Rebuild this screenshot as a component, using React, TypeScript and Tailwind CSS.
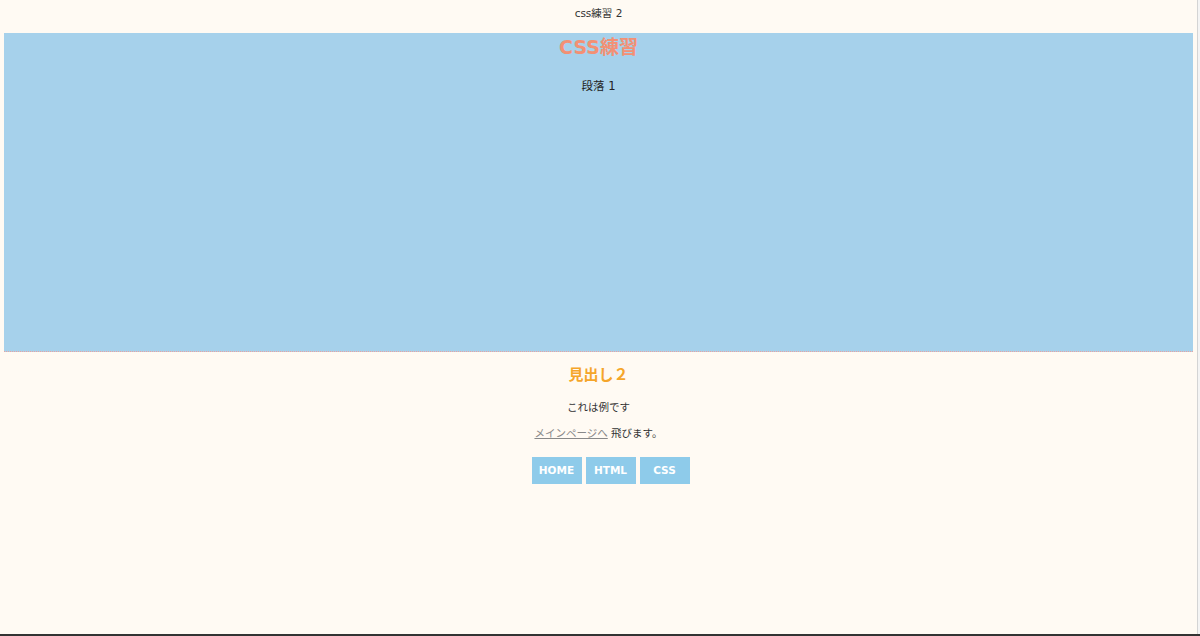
export default function App() {
  const font = { fontFamily: '"DejaVu Sans", Verdana, "Noto Sans CJK JP", sans-serif' };
  return (
    <div className="w-[1200px] h-[636px] flex flex-col overflow-hidden bg-[#fffaf3]" style={font}>
      <div className="flex flex-1 min-h-0">
        <div className="flex-1 flex flex-col items-stretch">
          <div className="h-[33px] flex items-center justify-center text-[10.5px] text-[#333] pb-[10px] pt-[4px]">
            css練習 2
          </div>
          <div className="mx-[4px] h-[319px] bg-[#a6d1eb] border-b border-dotted border-[#e9a3a0] flex flex-col items-center">
            <h1 className="text-[19px] font-bold text-[#f39074] leading-[26px] mt-[1px]">CSS練習</h1>
            <p className="text-[11.5px] text-[#222] mt-[18px] leading-[16px]">段落 1</p>
          </div>
          <div className="flex flex-col items-center">
            <h2 className="text-[15px] font-bold text-[#f5a52a] leading-[20px] mt-[13px]">見出し２</h2>
            <p className="text-[10.5px] text-[#333] leading-[16px] mt-[14px]">これは例です</p>
            <p className="text-[10.5px] text-[#333] leading-[16px] mt-[10px]">
              <a className="text-[#888] underline">メインページへ</a> 飛びます。
            </p>
            <div className="flex gap-[4px] mt-[16px] ml-[24px]">
              {['HOME', 'HTML', 'CSS'].map((t) => (
                <div key={t} className="w-[50px] h-[27px] bg-[#8ecbea] text-white text-[10.5px] font-bold flex items-center justify-center">
                  {t}
                </div>
              ))}
            </div>
          </div>
        </div>
        <div className="w-[1px] bg-[#d4d4d4]" />
        <div className="w-[2px] bg-[#f4f4f4]" />
      </div>
      <div className="h-[2px] bg-[#333]" />
    </div>
  );
}
